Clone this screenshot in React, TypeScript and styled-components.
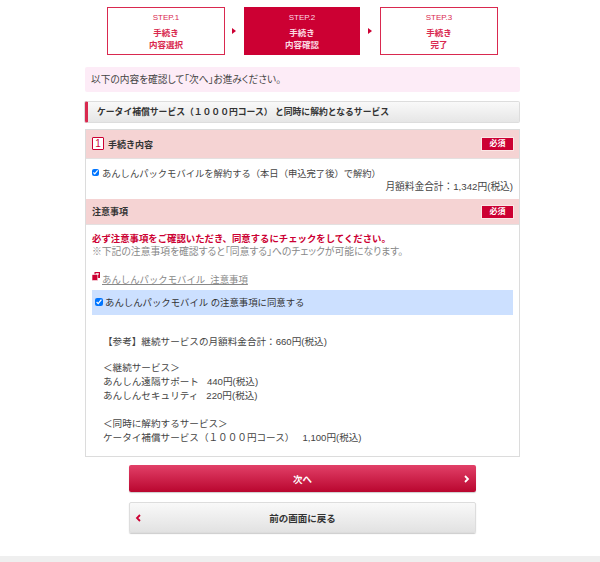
import styled, { createGlobalStyle } from "styled-components";

const GlobalStyle = createGlobalStyle`
  html, body {
    margin: 0;
    padding: 0;
    background: #fff;
    font-family: "Liberation Sans", "Noto Sans CJK JP", sans-serif;
    color: #333;
    overflow: hidden;
  }
`;

const steps = [
  { label: "STEP.1", lines: ["手続き", "内容選択"] },
  { label: "STEP.2", lines: ["手続き", "内容確認"], active: true },
  { label: "STEP.3", lines: ["手続き", "完了"] },
];

function CopyIcon() {
  return (
    <svg width="8" height="9" viewBox="0 0 8 9">
      <rect x="2.5" y="0" width="5.5" height="6" fill="#cc0033" />
      <rect x="3.6" y="1.2" width="3.2" height="1.4" fill="#fff" />
      <rect x="0" y="2.6" width="5.8" height="6" fill="#cc0033" stroke="#fff" strokeWidth="0.6" />
    </svg>
  );
}

export default function App() {
  return (
    <Page>
      <GlobalStyle />
      <Main>
        <StepBar>
          {steps.map((s, i) => (
            <StepGroup key={s.label}>
              {i > 0 && <StepArrow />}
              <Step $active={s.active}>
                <StepLabel>{s.label}</StepLabel>
                <StepName>
                  {s.lines[0]}
                  <br />
                  {s.lines[1]}
                </StepName>
              </Step>
            </StepGroup>
          ))}
        </StepBar>

        <Notice>以下の内容を確認して「次へ」お進みください。</Notice>

        <TitleBar>ケータイ補償サービス（１０００円コース） と同時に解約となるサービス</TitleBar>

        <Panel>
          <SectionHead $tall>
            <SectionTitle>
              <NumBadge>1</NumBadge>
              手続き内容
            </SectionTitle>
            <Required>必須</Required>
          </SectionHead>
          <ProcedureBody>
            <CheckRow>
              <SmallCheck type="checkbox" defaultChecked />
              あんしんパックモバイルを解約する（本日（申込完了後）で解約）
            </CheckRow>
            <Total>月額料金合計：1,342円(税込)</Total>
          </ProcedureBody>

          <SectionHead>
            <SectionTitle>注意事項</SectionTitle>
            <Required>必須</Required>
          </SectionHead>
          <NoticeBody>
            <Warning>必ず注意事項をご確認いただき、同意するにチェックをしてください。</Warning>
            <Hint>※下記の注意事項を確認すると「同意する」へのチェックが可能になります。</Hint>
            <DocLink>
              <DocIcon>
                <CopyIcon />
              </DocIcon>
              <DocText>あんしんパックモバイル&nbsp;&nbsp;注意事項</DocText>
            </DocLink>
            <AgreeRow>
              <AgreeCheck type="checkbox" defaultChecked />
              あんしんパックモバイル の注意事項に同意する
            </AgreeRow>
            <Reference>
              <p>【参考】継続サービスの月額料金合計：660円(税込)</p>
              <p>
                ＜継続サービス＞
                <br />
                あんしん遠隔サポート&nbsp;&nbsp;&nbsp;440円(税込)
                <br />
                あんしんセキュリティ&nbsp;&nbsp;&nbsp;220円(税込)
              </p>
              <p>
                ＜同時に解約するサービス＞
                <br />
                ケータイ補償サービス（１０００円コース）&nbsp;&nbsp;&nbsp;1,100円(税込)
              </p>
            </Reference>
          </NoticeBody>
        </Panel>

        <Actions>
          <NextButton>
            次へ
            <ChevronRight viewBox="0 0 6 8">
              <path d="M1 1l3 3-3 3" fill="none" stroke="#fff" strokeWidth="1.8" />
            </ChevronRight>
          </NextButton>
          <BackButton>
            <ChevronLeft viewBox="0 0 6 8">
              <path d="M5 1L2 4l3 3" fill="none" stroke="#cc0033" strokeWidth="1.8" />
            </ChevronLeft>
            前の画面に戻る
          </BackButton>
        </Actions>
      </Main>
      <Footer />
    </Page>
  );
}

const Page = styled.div`
  width: 600px;
  height: 562px;
  display: flex;
  flex-direction: column;
  justify-content: space-between;
  overflow: hidden;
`;

const Main = styled.main`
  width: 435px;
  margin-left: 85px;
  padding-top: 7px;
`;

const StepBar = styled.div`
  display: flex;
  padding-left: 22px;
`;

const StepGroup = styled.div`
  display: flex;
  align-items: center;
  &:last-child {
    margin-left: 1px;
  }
`;

const StepArrow = styled.span`
  width: 0;
  height: 0;
  margin: 0 8px 0 7px;
  border-left: 4px solid #cc0033;
  border-top: 3px solid transparent;
  border-bottom: 3px solid transparent;
`;

const Step = styled.div<{ $active?: boolean }>`
  box-sizing: border-box;
  width: ${({ $active }) => ($active ? "116px" : "118px")};
  height: 48px;
  border: 1px solid ${({ $active }) => ($active ? "#cc0033" : "#d9294f")};
  background: ${({ $active }) => ($active ? "#cc0033" : "#fff")};
  color: ${({ $active }) => ($active ? "#fbdbe3" : "#d9294f")};
  text-align: center;
`;

const StepLabel = styled.div`
  font-size: 8px;
  line-height: 10px;
  margin-top: 5px;
`;

const StepName = styled.div`
  font-size: 8.5px;
  font-weight: bold;
  line-height: 12px;
  margin-top: 4px;
`;

const Notice = styled.div`
  box-sizing: border-box;
  height: 25px;
  margin-top: 12px;
  padding-left: 6px;
  background: #fdecf7;
  border-radius: 2px;
  font-size: 9.7px;
  font-feature-settings: "palt";
  line-height: 25px;
  color: #444;
`;

const TitleBar = styled.h2`
  box-sizing: border-box;
  height: 22px;
  margin: 9px 0 0;
  padding-left: 9px;
  background: linear-gradient(#f9f9f9, #e6e6e6);
  border: 1px solid #ddd;
  border-left: 3px solid #d9294f;
  box-shadow: -1px 0 0 #ddd;
  border-radius: 2px;
  font-size: 8.8px;
  line-height: 20px;
  font-weight: bold;
  color: #333;
`;

const Panel = styled.section`
  box-sizing: border-box;
  height: 328px;
  margin-top: 6px;
  border: 1px solid #dcdcdc;
`;

const SectionHead = styled.div<{ $tall?: boolean }>`
  box-sizing: border-box;
  height: ${({ $tall }) => ($tall ? "29px" : "26px")};
  display: flex;
  align-items: center;
  justify-content: space-between;
  padding: 0 5px 0 6px;
  background: #f5d3d3;
  border-bottom: 1px solid #e4e0e0;
`;

const SectionTitle = styled.div`
  display: flex;
  align-items: center;
  gap: 4px;
  font-size: 9px;
  font-weight: bold;
  color: #333;
`;

const NumBadge = styled.span`
  box-sizing: border-box;
  width: 12px;
  height: 13px;
  margin-bottom: 2px;
  background: #fff;
  border: 1px solid #cc0033;
  border-radius: 1px;
  color: #cc0033;
  font-size: 10px;
  font-weight: normal;
  line-height: 11px;
  text-align: center;
`;

const Required = styled.span`
  box-sizing: border-box;
  width: 33px;
  height: 14px;
  background: #cc0033;
  border: 1px solid #fbe6e6;
  color: #fff;
  font-size: 8px;
  font-weight: bold;
  line-height: 12px;
  text-align: center;
`;

const ProcedureBody = styled.div`
  box-sizing: border-box;
  height: 40px;
  padding: 7px 6px 0;
  font-size: 9.3px;
  color: #444;
`;

const CheckRow = styled.label`
  display: flex;
  align-items: center;
  height: 13px;
`;

const SmallCheck = styled.input`
  width: 7px;
  height: 7px;
  margin: 0 3px 0 0;
`;

const Total = styled.div`
  font-size: 9.7px;
  text-align: right;
  line-height: 13px;
  margin-top: 1px;
`;

const NoticeBody = styled.div`
  padding: 7px 6px 0;
  font-size: 9.4px;
  color: #444;
`;

const Warning = styled.div`
  font-weight: bold;
  color: #cc0033;
  line-height: 13px;
`;

const Hint = styled.div`
  color: #888;
  font-feature-settings: "palt";
  font-size: 9.8px;
  line-height: 13px;
`;

const DocLink = styled.div`
  display: flex;
  align-items: center;
  height: 13px;
  margin-top: 14px;
  gap: 2px;
`;

const DocIcon = styled.span`
  display: flex;
  margin-bottom: 5px;
`;

const DocText = styled.span`
  color: #888;
  text-decoration: underline;
`;

const AgreeRow = styled.label`
  box-sizing: border-box;
  display: flex;
  align-items: center;
  height: 25px;
  margin-top: 5px;
  padding: 0 0 1px 3px;
  background: #cce0ff;
  color: #333;
  font-size: 9.4px;
`;

const AgreeCheck = styled.input`
  width: 8px;
  height: 8px;
  margin: 0 2px 0 0;
`;

const Reference = styled.div`
  padding: 20px 0 0 11px;
  font-size: 9.6px;
  line-height: 14px;
  color: #444;
  p {
    margin: 0 0 14px;
  }
  p:first-child {
    margin-bottom: 12px;
  }
`;

const Actions = styled.div`
  width: 347px;
  margin: 8px 0 0 44px;
  display: flex;
  flex-direction: column;
  gap: 10px;
`;

const NextButton = styled.button`
  position: relative;
  height: 27px;
  padding: 0;
  border: none;
  border-radius: 2px;
  background: linear-gradient(#e24068, #b9062f);
  box-shadow: 0 1px 1px #ccc;
  color: #fff;
  font: bold 9.5px "Liberation Sans", "Noto Sans CJK JP", sans-serif;
`;

const BackButton = styled.button`
  position: relative;
  height: 31px;
  padding: 0;
  border: 1px solid #ddd;
  border-radius: 2px;
  background: linear-gradient(#f9f9f9, #e2e2e2);
  box-shadow: 0 1px 1px #ccc;
  color: #333;
  font: bold 9.5px "Liberation Sans", "Noto Sans CJK JP", sans-serif;
`;

const ChevronRight = styled.svg`
  position: absolute;
  right: 6px;
  top: 10px;
  width: 6px;
  height: 8px;
`;

const ChevronLeft = styled.svg`
  position: absolute;
  left: 5px;
  top: 11px;
  width: 6px;
  height: 8px;
`;

const Footer = styled.div`
  height: 6px;
  background: #efefef;
`;
